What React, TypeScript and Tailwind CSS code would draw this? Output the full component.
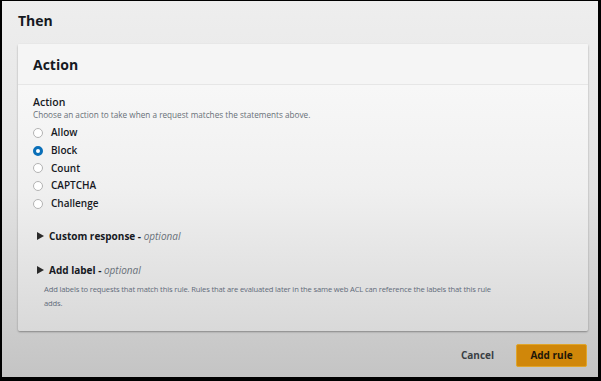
const options = ["Allow", "Block", "Count", "CAPTCHA", "Challenge"];

const Radio = ({ checked }: { checked?: boolean }) =>
  checked ? (
    <span className="w-[10px] h-[10px] rounded-full border-[3px] border-[#0a6fb8] bg-white" />
  ) : (
    <span className="w-[10px] h-[10px] rounded-full border border-[#b3b3b3] bg-white" />
  );

const Caret = () => (
  <svg width="7" height="8" viewBox="0 0 7 8" className="shrink-0">
    <path d="M0 0 L7 4 L0 8 Z" fill="#2a2a2a" />
  </svg>
);

export default function App() {
  return (
    <div className="w-[601px] h-[381px] bg-black pt-[1px] pl-[2px] pr-[3px] pb-[4px] font-['Open_Sans',sans-serif]">
      <div className="flex flex-col h-full bg-gradient-to-b from-[#eeeeee] via-[#e2e2e2] to-[#c4c4c4]">
        <h2 className="pl-[16px] pt-[11px] text-[14px] font-bold text-[#16191f] leading-[18px]">
          Then
        </h2>

        <div className="mt-[14px] ml-[16px] mr-[10px] h-[287px] flex flex-col rounded-[2px] shadow-[0_1px_2px_rgba(0,0,0,0.35)] bg-gradient-to-b from-[#fafafa] via-[#f0f0f0] to-[#d9d9d9]">
          <div className="h-[41px] flex items-center pl-[15px] bg-[#f4f4f4]/80 border-b border-[#e6e6e6]">
            <span className="text-[14px] font-bold text-[#16191f]">Action</span>
          </div>

          <div className="pl-[15px] pt-[10px]">
            <div className="text-[10.5px] font-semibold text-[#16191f] leading-[14px]">Action</div>
            <div className="text-[8.2px] text-[#687078] leading-[12px]">
              Choose an action to take when a request matches the statements above.
            </div>

            <div className="mt-[3px] flex flex-col">
              {options.map((o) => (
                <label key={o} className="h-[17.7px] flex items-center gap-[8px]">
                  <Radio checked={o === "Block"} />
                  <span className="text-[10px] font-semibold text-[#16191f]">{o}</span>
                </label>
              ))}
            </div>

            <div className="mt-[17px] pl-[4px] flex items-center gap-[5px] h-[14px]">
              <Caret />
              <span className="text-[10px] font-bold text-[#16191f]">
                Custom response - <i className="font-normal text-[#687078]">optional</i>
              </span>
            </div>

            <div className="mt-[20px] pl-[4px] flex items-center gap-[5px] h-[14px]">
              <Caret />
              <span className="text-[10px] font-bold text-[#16191f]">
                Add label - <i className="font-normal text-[#687078]">optional</i>
              </span>
            </div>
            <p className="mt-[5px] ml-[11px] w-[452px] text-[7.6px] tracking-[-0.15px] leading-[14px] text-[#5f6b7a]">
              Add labels to requests that match this rule. Rules that are evaluated later in the same web ACL can reference the labels that this rule adds.
            </p>
          </div>
        </div>

        <div className="mt-[13px] mr-[11px] flex items-center justify-end gap-[22px]">
          <span className="text-[10px] font-bold text-[#3a3f45]">Cancel</span>
          <button className="w-[71px] h-[23px] rounded-[2px] bg-[#d0870a] border border-[#e0a52a] text-[10px] font-bold text-[#1d1608]">
            Add rule
          </button>
        </div>
      </div>
    </div>
  );
}
